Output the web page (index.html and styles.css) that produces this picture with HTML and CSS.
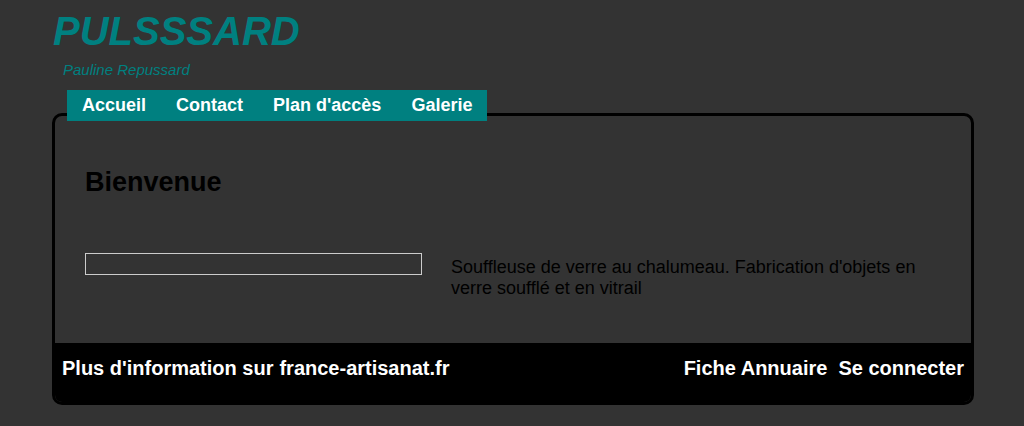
FILE: index.html
```html
<!DOCTYPE html>
<html lang="fr">
<head>
    <meta charset="UTF-8">
    <meta name="viewport" content="width=device-width, initial-scale=1.0">
    <title>Pulsssard</title>
    <link rel="stylesheet" href="styles.css">
</head>
<body>
    <div id="page">
        <header class="head">
            <h1 class="logo">PULSSSARD</h1>
            <p class="sub">Pauline Repussard</p>
        </header>
        <nav class="menu">
            <a href="#">Accueil</a>
            <a href="#">Contact</a>
            <a href="#">Plan d'accès</a>
            <a href="#">Galerie</a>
        </nav>
        <div class="box">
            <div class="content">
                <h2>Bienvenue</h2>
                <div class="row">
                    <div class="frame"></div>
                    <p class="desc">Souffleuse de verre au chalumeau. Fabrication d'objets en verre soufflé et en vitrail</p>
                </div>
            </div>
            <footer class="foot">
                <div class="foot-left">
                    <span>Plus d'information sur</span>
                    <a href="#">france-artisanat.fr</a>
                </div>
                <div class="foot-right">
                    <a href="#">Fiche Annuaire</a>
                    <a href="#">Se connecter</a>
                </div>
            </footer>
        </div>
    </div>
</body>
</html>
```
FILE: styles.css
```css
* { margin: 0; padding: 0; box-sizing: border-box; }
body {
    background-color: #333;
    font-family: "Liberation Sans", Arial, sans-serif;
    color: #000;
    padding-top: 8px;
}
#page {
    width: 922px;
    margin-left: 52px;
}
.logo {
    padding-left: 1px;
    font-size: 40px;
    font-style: italic;
    font-weight: bold;
    line-height: 46px;
    color: #008080;
}
.sub {
    margin-top: 7px;
    padding-left: 11px;
    font-size: 15px;
    font-style: italic;
    line-height: 17px;
    color: #008080;
}
.menu {
    position: relative;
    z-index: 1;
    display: inline-flex;
    margin: 12px 0 0 15px;
    background-color: #008080;
}
.menu a {
    padding: 5px 15px;
    font-size: 18px;
    font-weight: bold;
    line-height: 21px;
    color: #fff;
    text-decoration: none;
}
.box {
    margin-top: -8px;
    border: 3px solid #000;
    border-radius: 10px;
    overflow: hidden;
}
.content {
    padding: 51px 30px 44px;
}
.content h2 {
    font-size: 27px;
    line-height: 31px;
}
.row {
    display: grid;
    grid-template-columns: 337px 1fr;
    column-gap: 29px;
    margin-top: 55px;
}
.frame {
    height: 22px;
    border: 1px solid #ccc;
}
.desc {
    padding-top: 4px;
    font-size: 18px;
    line-height: 21px;
}
.foot {
    display: flex;
    justify-content: space-between;
    padding: 14px 7px 22px;
    background-color: #000;
    font-size: 20px;
    font-weight: bold;
    line-height: 23px;
    color: #fff;
}
.foot a {
    color: #fff;
    text-decoration: none;
}
.foot-left, .foot-right {
    display: flex;
}
.foot-left { gap: 6px; }
.foot-right { gap: 11px; }
```
